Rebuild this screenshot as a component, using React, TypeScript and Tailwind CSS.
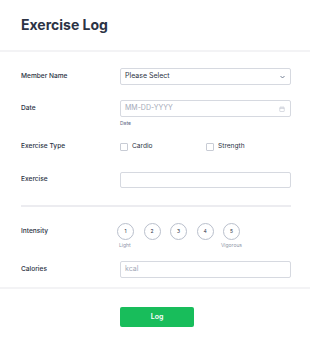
import React from "react";

const Label = ({ children }: { children: React.ReactNode }) => (
  <div className="w-[99px] shrink-0 text-[6.6px] font-medium text-[#2c3345]">{children}</div>
);

export default function App() {
  return (
    <div className="w-[310px] h-[338px] bg-white" style={{ fontFamily: "Inter, 'Noto Sans', sans-serif" }}>
      <div className="pt-[16px] pb-[17px] px-[21px] border-b-2 border-[#f3f3f5]">
        <div className="text-[14px] leading-[17px] font-bold text-[#2c3345]">Exercise Log</div>
      </div>
      <div className="pl-[21px] pr-[19px]">
        {/* Member Name */}
        <div className="mt-[16px] flex items-center h-[17px]">
          <Label>Member Name</Label>
          <div className="flex-1 h-[17px] border border-[#d6d9e0] rounded-[2px] flex items-center justify-between px-[4px]">
            <span className="text-[7px] text-[#2c3345]">Please Select</span>
            <svg width="5" height="4" viewBox="0 0 10 6" className="mr-[1px]">
              <path d="M1 1l4 4 4-4" stroke="#57647e" strokeWidth="1.6" fill="none" />
            </svg>
          </div>
        </div>
        {/* Date */}
        <div className="mt-[15px] flex items-center h-[17px]">
          <Label>Date</Label>
          <div className="flex-1 h-[17px] border border-[#d6d9e0] rounded-[2px] flex items-center justify-between px-[4px]">
            <span className="text-[7px] text-[#a3a9b8]">MM-DD-YYYY</span>
            <svg width="6" height="6" viewBox="0 0 12 12" className="mr-[1px]">
              <rect x="1.5" y="2.5" width="9" height="8.5" rx="1" stroke="#b4b9c6" strokeWidth="1" fill="none" />
              <path d="M1.5 5h9" stroke="#b4b9c6" strokeWidth="1" />
              <path d="M4 1v2.5M8 1v2.5" stroke="#b4b9c6" strokeWidth="1" />
            </svg>
          </div>
        </div>
        <div className="pl-[99px] mt-[3px] text-[5px] leading-[6px] text-[#57647e]">Date</div>
        {/* Exercise Type */}
        <div className="mt-[16px] flex items-center h-[9px]">
          <Label>Exercise Type</Label>
          <div className="flex items-center w-[86px]">
            <div className="w-[8px] h-[8px] border border-[#c8ccd5] rounded-[1px]" />
            <span className="ml-[4px] text-[6.6px] text-[#2c3345]">Cardio</span>
          </div>
          <div className="flex items-center">
            <div className="w-[8px] h-[8px] border border-[#c8ccd5] rounded-[1px]" />
            <span className="ml-[4px] text-[6.6px] text-[#2c3345]">Strength</span>
          </div>
        </div>
        {/* Exercise */}
        <div className="mt-[21px] flex items-center h-[16px]">
          <Label>Exercise</Label>
          <div className="flex-1 h-[16px] border border-[#d6d9e0] rounded-[2px]" />
        </div>
        <div className="mt-[17px] h-[2px] bg-[#ececf0]" />
        {/* Intensity */}
        <div className="mt-[16px] flex items-center h-[17px]">
          <Label>Intensity</Label>
          <div className="flex gap-[9.5px] -ml-[3px]">
            {[1, 2, 3, 4, 5].map((n) => (
              <div key={n} className="w-[17px] h-[17px] rounded-full border border-[#b9bfcc] flex items-center justify-center text-[5px] text-[#2c3345]">
                {n}
              </div>
            ))}
          </div>
        </div>
        <div className="flex mt-[2px] text-[5px] leading-[6px] text-[#8d95a8]">
          <div className="w-[98px]" />
          <div className="w-[123px] flex justify-between">
            <span>Light</span>
            <span>Vigorous</span>
          </div>
        </div>
        {/* Calories */}
        <div className="mt-[13px] flex items-center h-[17px]">
          <Label>Calories</Label>
          <div className="flex-1 h-[17px] border border-[#d6d9e0] rounded-[2px] flex items-center px-[4px]">
            <span className="text-[7px] text-[#a3a9b8]">kcal</span>
          </div>
        </div>
      </div>
      <div className="mt-[9px] border-t-2 border-[#f3f3f5]">
        <div className="pl-[120px] pt-[12px]">
          <button className="w-[74px] h-[20px] rounded-[2px] bg-[#18bd5b] text-white text-[7px] font-semibold">Log</button>
        </div>
      </div>
    </div>
  );
}
